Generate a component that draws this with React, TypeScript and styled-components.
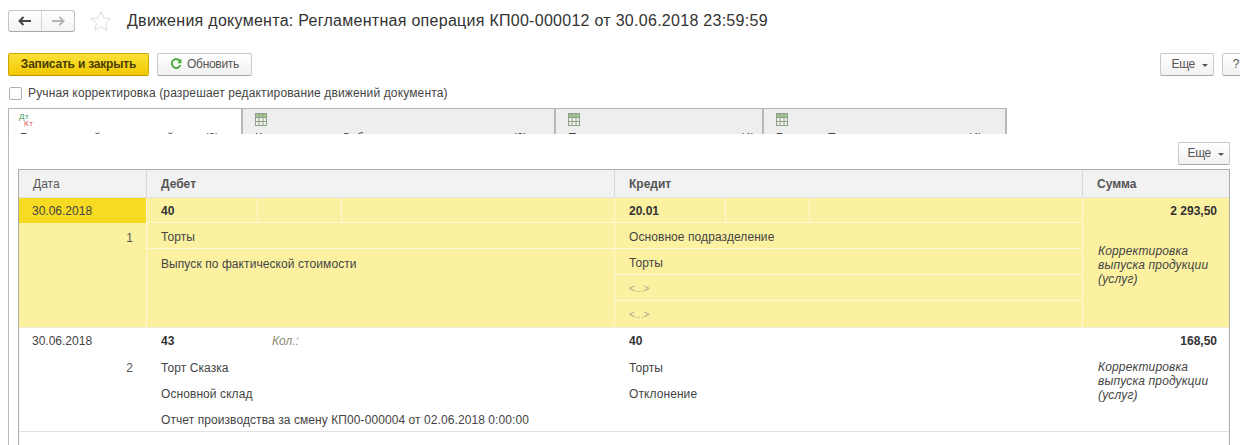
import styled, { createGlobalStyle } from "styled-components";

const GlobalStyle = createGlobalStyle`
  html, body {
    margin: 0;
    padding: 0;
    background: #fff;
  }
  body {
    font-family: "Liberation Sans", Arial, sans-serif;
    font-size: 12px;
    color: #333;
  }
`;

const Page = styled.div`
  width: 1240px;
  height: 445px;
  overflow: hidden;
  background: #fff;
`;

const TitleBar = styled.div`
  display: flex;
  align-items: center;
  height: 22px;
  padding: 10px 0 0 8px;
`;

const NavGroup = styled.div`
  display: flex;
  width: 67px;
  height: 22px;
  box-sizing: border-box;
  border: 1px solid #c4c4c4;
  border-bottom-color: #a8a8a8;
  border-radius: 3px;
  background: linear-gradient(#fff, #f3f3f3);
`;

const NavButton = styled.div<{ $divider?: boolean }>`
  flex: 1;
  display: flex;
  align-items: center;
  justify-content: center;
  border-right: ${(p) => (p.$divider ? "1px solid #d6d6d6" : "none")};
`;

const StarIcon = styled.svg`
  width: 22px;
  height: 22px;
  margin: 0 15px 0 15px;
`;

const Title = styled.div`
  font-size: 16px;
  letter-spacing: 0.28px;
  color: #333;
  white-space: nowrap;
`;

const CommandBar = styled.div`
  display: flex;
  align-items: center;
  gap: 8px;
  height: 23px;
  margin: 21px -10px 0 0;
  padding-left: 8px;
`;

const Button = styled.div<{ $width: number; $primary?: boolean; $menu?: boolean }>`
  flex: none;
  display: flex;
  align-items: center;
  justify-content: ${(p) => (p.$menu ? "flex-end" : "center")};
  gap: ${(p) => (p.$menu ? 7 : 5)}px;
  box-sizing: border-box;
  width: ${(p) => p.$width}px;
  height: 23px;
  padding: 0 ${(p) => (p.$menu ? 5 : 0)}px 1px 0;
  border: 1px solid ${(p) => (p.$primary ? "#c9a900" : "#c8c8c8")};
  border-bottom-color: ${(p) => (p.$primary ? "#b39600" : "#a6a6a6")};
  border-radius: 2px;
  background: ${(p) =>
    p.$primary ? "linear-gradient(#fbe13a, #f3c800)" : "linear-gradient(#fff, #f1f1f1)"};
  color: ${(p) => (p.$primary ? "#4a3d00" : "#555")};
  font-weight: ${(p) => (p.$primary ? 700 : 400)};
  font-size: 12px;
  letter-spacing: ${(p) => (p.$primary ? "-0.2px" : "-0.3px")};
  white-space: nowrap;
`;

const Spacer = styled.div`
  flex: 1;
`;

const Caret = styled.span`
  width: 0;
  height: 0;
  margin-top: 2px;
  border-left: 3px solid transparent;
  border-right: 3px solid transparent;
  border-top: 3px solid #555;
`;

const CheckRow = styled.label`
  display: flex;
  align-items: center;
  gap: 6px;
  height: 16px;
  margin-top: 9px;
  padding-left: 9px;
  color: #444;
  letter-spacing: 0.14px;
`;

const CheckBox = styled.span`
  width: 13px;
  height: 13px;
  box-sizing: border-box;
  border: 1px solid #b0b0b0;
  border-radius: 2px;
  background: #fff;
`;

const TabStrip = styled.div`
  display: flex;
  height: 26px;
  margin: 7px 0 0 8px;
`;

const Tab = styled.div<{ $width: number; $active?: boolean }>`
  flex: none;
  box-sizing: border-box;
  width: ${(p) => p.$width}px;
  height: 26px;
  padding: 4px 0 0 ${(p) => (p.$active ? 11 : 12)}px;
  overflow: hidden;
  border-top: 1px solid #b4b4b4;
  border-right: 2px solid #b8b8b8;
  border-left: ${(p) => (p.$active ? "1px solid #b4b4b4" : "none")};
  background: ${(p) => (p.$active ? "#fff" : "#eeeeee")};
  color: #444;
  white-space: nowrap;
`;

const TabIconSlot = styled.div`
  position: relative;
  width: 14px;
  height: 13px;
  margin-bottom: 5px;
`;

const DocMark = styled.span<{ $credit?: boolean }>`
  position: absolute;
  left: ${(p) => (p.$credit ? 4 : -1)}px;
  top: ${(p) => (p.$credit ? 7 : 0)}px;
  font-size: 8px;
  line-height: 7px;
  letter-spacing: 0.5px;
  color: ${(p) => (p.$credit ? "#e0505a" : "#3f9a5a")};
`;

const TabLabel = styled.div`
  line-height: 14px;
`;

const Panel = styled.div`
  height: 311px;
  margin-left: 8px;
  padding: 8px 10px 0 9px;
  box-sizing: border-box;
  border-left: 1px solid #bdbdbd;
`;

const PanelTools = styled.div`
  display: flex;
  justify-content: flex-end;
  height: 23px;
  margin-bottom: 4px;
`;

const Table = styled.div`
  width: 1212px;
  height: 276px;
  box-sizing: border-box;
  border: 1px solid #ababab;
  border-bottom: none;
`;

const Columns = styled.div<{ $selected?: boolean }>`
  display: grid;
  grid-template-columns: 128px 468px 468px 1fr;
  background: ${(p) => (p.$selected ? "#fbf1a1" : "#fff")};
  border-bottom: 1px solid ${(p) => (p.$selected ? "#f1eeda" : "#e2e2e2")};
`;

const HeadCell = styled.div<{ $bold?: boolean; $last?: boolean }>`
  height: 27px;
  line-height: 29px;
  padding-left: 14px;
  background: #f2f2f2;
  border-right: ${(p) => (p.$last ? "none" : "1px solid #d8d8d8")};
  color: #555;
  font-weight: ${(p) => (p.$bold ? 700 : 400)};
`;

const Col = styled.div<{ $selected?: boolean; $last?: boolean }>`
  display: flex;
  flex-direction: column;
  border-right: ${(p) =>
    p.$last ? "none" : p.$selected ? "1px solid #fdf9d6" : "1px solid transparent"};
`;

const Line = styled.div<{ $selected?: boolean; $tall?: boolean; $plain?: boolean }>`
  display: flex;
  align-items: center;
  flex: ${(p) => (p.$tall ? 1 : "none")};
  box-sizing: border-box;
  height: ${(p) => (p.$tall ? "auto" : "26px")};
  min-height: 26px;
  padding: ${(p) => (p.$plain ? 4 : 2)}px 0 0 14px;
  border-bottom: 1px solid ${(p) => (p.$selected ? "#fdf9d6" : "transparent")};
  letter-spacing: 0.08px;
  color: #444;
  white-space: nowrap;
`;

const TopAlignedText = styled.div`
  align-self: flex-start;
  margin-top: 6px;
`;

const DateCell = styled.div<{ $selected?: boolean }>`
  height: 25px;
  line-height: 27px;
  padding-left: 13px;
  background: ${(p) => (p.$selected ? "#f7da22" : "transparent")};
  color: #444;
`;

const Index = styled.div`
  height: 26px;
  line-height: 30px;
  padding-right: 13px;
  text-align: right;
  color: #555;
`;

const Part = styled.div<{ $width?: number; $selected?: boolean }>`
  box-sizing: border-box;
  width: ${(p) => (p.$width ? `${p.$width}px` : "auto")};
  flex: ${(p) => (p.$width ? "none" : 1)};
  align-self: stretch;
  display: flex;
  align-items: center;
  padding: 2px 0 0 14px;
  border-right: ${(p) => (p.$width && p.$selected ? "1px solid #fdf9d6" : "none")};
`;

const AccountLine = styled.div<{ $selected?: boolean }>`
  display: flex;
  height: 24px;
  border-bottom: 1px solid ${(p) => (p.$selected ? "#fdf9d6" : "transparent")};
  color: #333;
`;

const Bold = styled.b`
  font-weight: 700;
  color: #333;
`;

const Qty = styled.i`
  color: #8a8a70;
`;

const Placeholder = styled.span`
  color: #a9a48a;
  font-size: 10px;
`;

const Amount = styled.div`
  height: 25px;
  line-height: 27px;
  padding-right: 12px;
  text-align: right;
  font-weight: 700;
  color: #333;
`;

const Comment = styled.div<{ $selected?: boolean }>`
  padding: ${(p) => (p.$selected ? 21 : 7)}px 8px 0 15px;
  font-style: italic;
  line-height: 14px;
  letter-spacing: 0.15px;
  color: #444;
`;

const TableIcon = () => (
  <svg width="12" height="13" viewBox="0 0 12 13">
    <rect x="0.5" y="0.5" width="11" height="12" fill="#eef3e6" stroke="#8f9f8f" />
    <rect x="1" y="1" width="10" height="3" fill="#9fc88a" />
    <path d="M0.5 4.5h11M0.5 8.5h11M4 0.5v12M8 0.5v12" stroke="#8f9f8f" fill="none" />
  </svg>
);

type RecordProps = {
  index: number;
  selected?: boolean;
  date: string;
  amount: string;
  debit: string;
  credit: string;
  qty?: boolean;
  debitLines: string[];
  creditLines: string[];
};

const AccountHead = ({ code, selected, qty }: { code: string; selected?: boolean; qty?: boolean }) => (
  <AccountLine $selected={selected}>
    <Part $width={111} $selected={selected}>
      <Bold>{code}</Bold>
    </Part>
    <Part $width={84} $selected={selected}>
      {qty && <Qty>Кол.:</Qty>}
    </Part>
    <Part />
  </AccountLine>
);

const Record = ({ index, selected, date, amount, debit, credit, qty, debitLines, creditLines }: RecordProps) => (
  <Columns $selected={selected}>
    <Col $selected={selected}>
      <DateCell $selected={selected}>{date}</DateCell>
      <Index>{index}</Index>
    </Col>
    <Col $selected={selected}>
      <AccountHead code={debit} selected={selected} qty={qty} />
      {debitLines.map((text, i) =>
        i === debitLines.length - 1 ? (
          <Line key={i} $tall={selected} $plain={!selected} $selected={false}>
            {selected ? <TopAlignedText>{text}</TopAlignedText> : text}
          </Line>
        ) : (
          <Line key={i} $plain={!selected} $selected={selected}>
            {text}
          </Line>
        ),
      )}
    </Col>
    <Col $selected={selected}>
      <AccountHead code={credit} selected={selected} />
      {creditLines.map((text, i) => (
        <Line key={i} $plain={!selected} $selected={selected && i < creditLines.length - 1}>
          {text === "<...>" ? <Placeholder>{text}</Placeholder> : text}
        </Line>
      ))}
      {!selected && <Line />}
    </Col>
    <Col $last>
      <Amount>{amount}</Amount>
      <Comment $selected={selected}>
        Корректировка
        <br />
        выпуска продукции
        <br />
        (услуг)
      </Comment>
    </Col>
  </Columns>
);

export default function App() {
  return (
    <Page>
      <GlobalStyle />
      <TitleBar>
        <NavGroup>
          <NavButton $divider>
            <svg width="14" height="10" viewBox="0 0 14 10">
              <path d="M1 5h12M5.5 1L1.5 5l4 4" stroke="#444" strokeWidth="2" fill="none" />
            </svg>
          </NavButton>
          <NavButton>
            <svg width="14" height="10" viewBox="0 0 14 10">
              <path d="M1 5h12M8.5 1l4 4-4 4" stroke="#b4b4b4" strokeWidth="2" fill="none" />
            </svg>
          </NavButton>
        </NavGroup>
        <StarIcon viewBox="0 0 22 22">
          <path
            d="M11 1.5l2.8 6.6 7 .6-5.3 4.6 1.6 7-6.1-3.7-6.1 3.7 1.6-7L.9 8.7l7-.6z"
            fill="#fff"
            stroke="#dcdcdc"
          />
        </StarIcon>
        <Title>Движения документа: Регламентная операция КП00-000012 от 30.06.2018 23:59:59</Title>
      </TitleBar>

      <CommandBar>
        <Button $width={141} $primary>
          Записать и закрыть
        </Button>
        <Button $width={95}>
          <svg width="12" height="12" viewBox="0 0 12 12">
            <path d="M10 3.2A4.4 4.4 0 1 0 10.4 7" stroke="#4aa83c" strokeWidth="2" fill="none" />
            <path d="M11.5 0.8v4.4H7.1z" fill="#4aa83c" />
          </svg>
          Обновить
        </Button>
        <Spacer />
        <Button $width={54} $menu>
          Еще <Caret />
        </Button>
        <Button $width={28}>?</Button>
      </CommandBar>

      <CheckRow>
        <CheckBox />
        Ручная корректировка (разрешает редактирование движений документа)
      </CheckRow>

      <TabStrip>
        <Tab $width={235} $active>
          <TabIconSlot>
            <DocMark>Дт</DocMark>
            <DocMark $credit>Кт</DocMark>
          </TabIconSlot>
          <TabLabel>Бухгалтерский и налоговый учет (2)</TabLabel>
        </Tab>
        <Tab $width={313}>
          <TabIconSlot>
            <TableIcon />
          </TabIconSlot>
          <TabLabel>Корректировка Себестоимости выпуска услуг (2)</TabLabel>
        </Tab>
        <Tab $width={208}>
          <TabIconSlot>
            <TableIcon />
          </TabIconSlot>
          <TabLabel>Прочие затраты производства (4)</TabLabel>
        </Tab>
        <Tab $width={243}>
          <TabIconSlot>
            <TableIcon />
          </TabIconSlot>
          <TabLabel>Расходы Производства на выпуск (4)</TabLabel>
        </Tab>
      </TabStrip>

      <Panel>
        <PanelTools>
          <Button $width={52} $menu>
            Еще <Caret />
          </Button>
        </PanelTools>
        <Table>
          <Columns>
            <HeadCell>Дата</HeadCell>
            <HeadCell $bold>Дебет</HeadCell>
            <HeadCell $bold>Кредит</HeadCell>
            <HeadCell $bold $last>
              Сумма
            </HeadCell>
          </Columns>
          <Record
            index={1}
            selected
            date="30.06.2018"
            amount="2 293,50"
            debit="40"
            credit="20.01"
            debitLines={["Торты", "Выпуск по фактической стоимости"]}
            creditLines={["Основное подразделение", "Торты", "<...>", "<...>"]}
          />
          <Record
            index={2}
            date="30.06.2018"
            amount="168,50"
            debit="43"
            credit="40"
            qty
            debitLines={["Торт Сказка", "Основной склад", "Отчет производства за смену КП00-000004 от 02.06.2018 0:00:00"]}
            creditLines={["Торты", "Отклонение"]}
          />
        </Table>
      </Panel>
    </Page>
  );
}
